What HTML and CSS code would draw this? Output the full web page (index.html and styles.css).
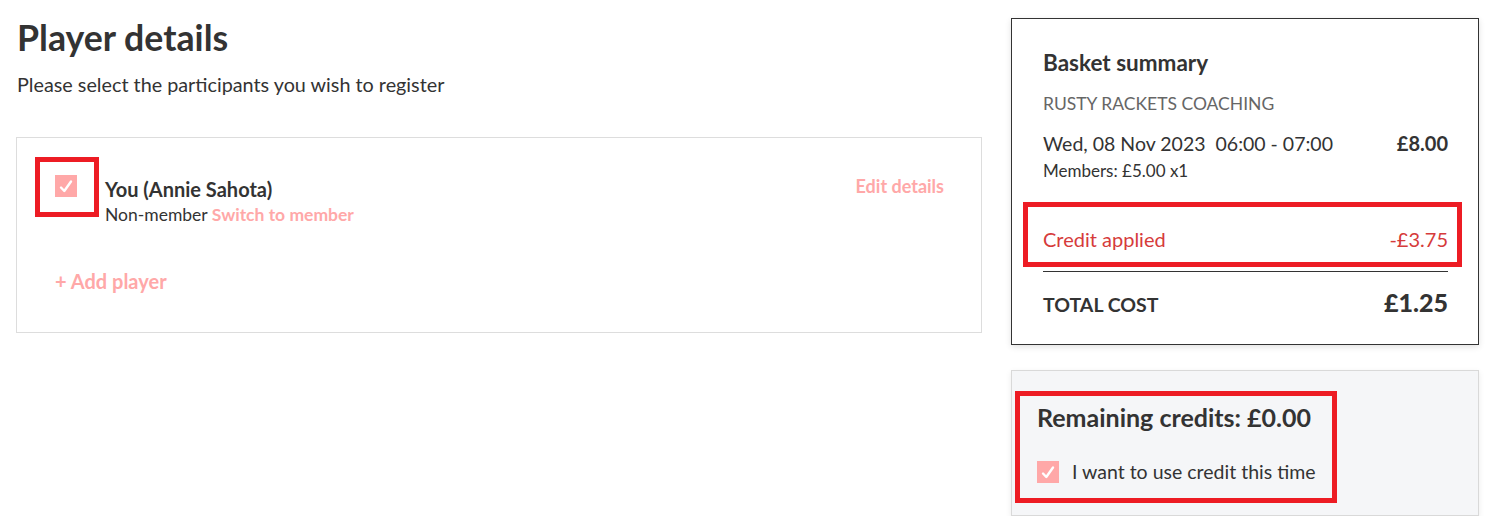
FILE: index.html
```html
<!DOCTYPE html>
<html lang="en">
<head>
  <meta charset="UTF-8">
  <meta name="viewport" content="width=device-width, initial-scale=1.0">
  <title>Player details</title>
  <link rel="stylesheet" href="styles.css">
</head>
<body>
<div class="page">
  <div class="main">
    <h1>Player details</h1>
    <p class="intro">Please select the participants you wish to register</p>

    <div class="players">
      <div class="player">
        <div class="check-wrap">
          <span class="checkbox"><svg viewBox="0 0 22 22"><path d="M6 12.5 L9.3 16 L16 6.5"/></svg></span>
          <span class="mark mark-player"></span>
        </div>
        <div class="player-info">
          <div class="player-name">You (Annie Sahota)</div>
          <div class="player-type">Non-member <a href="#" class="link">Switch to member</a></div>
        </div>
        <a href="#" class="link edit">Edit details</a>
      </div>
      <a href="#" class="link add">+ Add player</a>
    </div>
  </div>

  <div class="side">
    <div class="basket">
      <h2>Basket summary</h2>
      <div class="venue">RUSTY RACKETS COACHING</div>
      <div class="row session">
        <span>Wed, 08 Nov 2023&nbsp;&nbsp;06:00 - 07:00</span>
        <strong>£8.00</strong>
      </div>
      <div class="members">Members: £5.00 x1</div>
      <div class="row credit">
        <span>Credit applied</span>
        <span>-£3.75</span>
        <span class="mark mark-credit"></span>
      </div>
      <div class="row total">
        <span>TOTAL COST</span>
        <strong>£1.25</strong>
      </div>
    </div>

    <div class="credits">
      <h3>Remaining credits: £0.00</h3>
      <label class="use-credit">
        <span class="checkbox"><svg viewBox="0 0 22 22"><path d="M6 12.5 L9.3 16 L16 6.5"/></svg></span>
        I want to use credit this time
      </label>
      <span class="mark mark-credits"></span>
    </div>
  </div>
</div>
</body>
</html>
```

FILE: styles.css
```css
body {
  margin: 0;
  font-family: Lato, "Open Sans", sans-serif;
  color: #333;
  background-color: #fff;
}
a {
  text-decoration: none;
}
.page {
  display: flex;
  gap: 29px;
  padding: 18px 13px 0 16px;
}
.main {
  width: 966px;
}
h1 {
  margin: 0 0 0 1px;
  font-size: 35.7px;
  font-weight: bold;
  line-height: 40px;
}
.intro {
  margin: 14px 0 0 1px;
  font-size: 19.8px;
  line-height: 24px;
}
.players {
  margin-top: 41px;
  border: 1px solid #ddd;
  padding: 37px 37px 39px 38px;
}
.link {
  color: #ffa8a8;
  font-weight: bold;
}
.player {
  display: flex;
  align-items: flex-start;
}
.check-wrap {
  position: relative;
  height: 22px;
}
.checkbox {
  display: inline-block;
  flex: none;
  width: 22px;
  height: 22px;
  background-color: #ffa8a8;
}
.checkbox svg {
  display: block;
  width: 22px;
  height: 22px;
  fill: none;
  stroke: #fff;
  stroke-width: 2.4;
  stroke-linecap: round;
  stroke-linejoin: round;
}
.player-info {
  margin-left: 28px;
  padding-top: 2px;
  flex: 1;
}
.player-name {
  font-size: 20px;
  font-weight: bold;
  line-height: 24px;
}
.player-type {
  font-size: 17.5px;
  line-height: 22px;
  margin-top: 3px;
}
.edit {
  font-size: 18px;
  line-height: 22px;
}
.add {
  display: inline-block;
  margin-top: 43px;
  font-size: 20px;
  line-height: 24px;
}
.side {
  width: 468px;
}
.basket {
  border: 1px solid #333;
  box-shadow: 0 2px 6px rgba(0, 0, 0, 0.12);
  padding: 29px 30px 24px 31px;
}
h2 {
  margin: 0;
  font-size: 22.5px;
  line-height: 30px;
}
.venue {
  margin-top: 15px;
  color: #666;
  font-size: 17.5px;
  line-height: 22px;
}
.row {
  display: flex;
  justify-content: space-between;
  align-items: baseline;
}
.session {
  margin-top: 16px;
  font-size: 19.5px;
  line-height: 24px;
}
.session strong {
  font-size: 20px;
}
.members {
  font-size: 17px;
  line-height: 22px;
  margin-top: 4px;
}
.credit {
  position: relative;
  margin-top: 45px;
  padding-bottom: 20px;
  border-bottom: 1px solid #333;
  color: #d63b3b;
  font-size: 20px;
  line-height: 24px;
}
.total {
  margin-top: 15px;
  font-size: 19.5px;
  line-height: 30px;
  font-weight: bold;
}
.total strong {
  font-size: 25px;
}
.credits {
  position: relative;
  margin-top: 25px;
  border: 1px solid #d9d9d9;
  background-color: #f5f6f8;
  box-shadow: 0 2px 6px rgba(0, 0, 0, 0.08);
  padding: 31px 25px 32px 25px;
}
h3 {
  margin: 0;
  font-size: 25px;
  line-height: 30px;
}
.use-credit {
  display: flex;
  align-items: center;
  gap: 13px;
  margin-top: 29px;
  font-size: 19.5px;
  line-height: 22px;
}
.mark {
  position: absolute;
  border: 5px solid #ed1c24;
  pointer-events: none;
}
.mark-player {
  left: -20px;
  top: -18px;
  width: 54px;
  height: 50px;
}
.mark-credit {
  left: -20px;
  right: -14px;
  top: -25px;
  bottom: 4px;
}
.mark-credits {
  left: 3px;
  top: 20px;
  width: 312px;
  height: 102px;
}
```
